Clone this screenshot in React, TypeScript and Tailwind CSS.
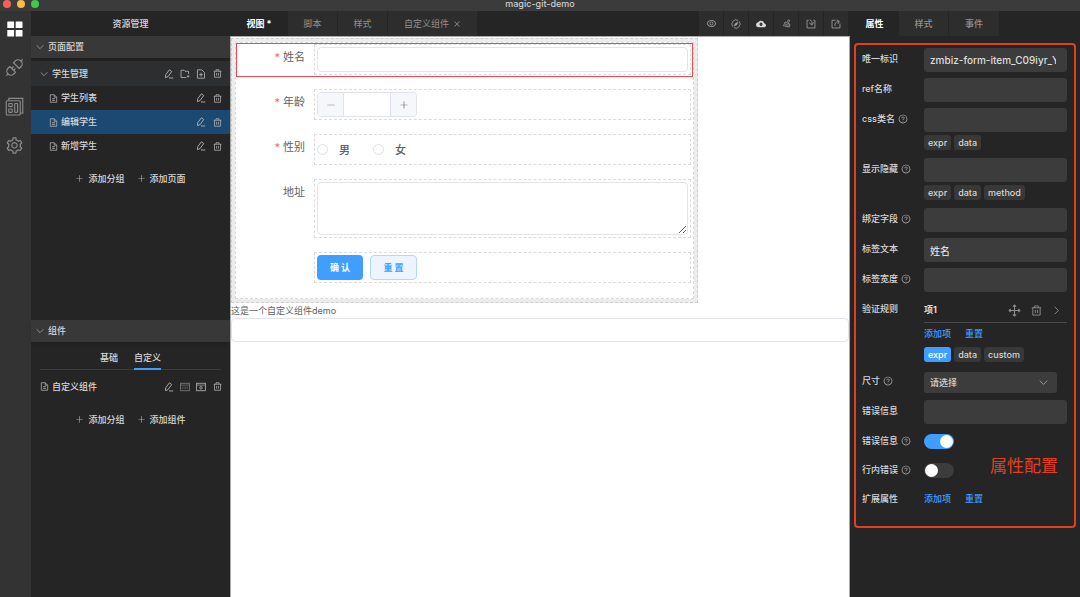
import React, { useState } from 'react';
import {
  AiOutlineSetting,
  AiOutlineEye,
  AiOutlinePlus,
  AiOutlineMinus,
  AiOutlineClose,
  AiOutlineQuestionCircle,
} from 'react-icons/ai';
import { MdCloudUpload } from 'react-icons/md';

type IconProps = { className?: string };

const Svg = ({ className, children }: IconProps & { children: React.ReactNode }) => (
  <svg
    viewBox="0 0 24 24"
    className={className}
    fill="none"
    stroke="currentColor"
    strokeWidth="2"
    aria-hidden="true"
  >
    {children}
  </svg>
);

const GridIcon = ({ className }: IconProps) => (
  <svg viewBox="0 0 16 16" className={className} fill="currentColor" aria-hidden="true">
    <rect x="0.3" y="0.5" width="6.8" height="6.6" rx="0.6" />
    <rect x="8.7" y="0.5" width="6.8" height="6.6" rx="0.6" />
    <rect x="0.3" y="9" width="6.8" height="6.6" rx="0.6" />
    <rect x="8.7" y="9" width="6.8" height="6.6" rx="0.6" />
  </svg>
);

const ApiIcon = ({ className }: IconProps) => (
  <svg
    viewBox="0 0 20 20"
    className={className}
    fill="none"
    stroke="currentColor"
    strokeWidth="1.3"
    strokeLinejoin="round"
    aria-hidden="true"
  >
    <path d="M9 5l6 6 1.800-1.800a4.200 4.200 0 0 0-6-6z" />
    <path d="M5 9l6 6-1.800 1.800a4.200 4.200 0 0 1-6-6z" />
    <path d="M16.600 3.400l2-2M3.400 16.600l-2 2M7 11l2-2M9 13l2-2" />
  </svg>
);

const LayoutIcon = ({ className }: IconProps) => (
  <svg
    viewBox="0 0 20 20"
    className={className}
    fill="none"
    stroke="currentColor"
    strokeWidth="1.2"
    aria-hidden="true"
  >
    <rect x="1.3" y="4" width="14.7" height="15" rx="1" />
    <path d="M4 4V1.4h14.7V17H16" />
    <rect x="4" y="6.8" width="3.6" height="3.4" rx="0.6" />
    <rect x="4" y="12.6" width="3.6" height="3.6" rx="0.6" />
    <rect x="10.2" y="6.8" width="3" height="9.4" rx="0.6" />
  </svg>
);

const ChevronDown = ({ className }: IconProps) => (
  <Svg className={className}>
    <path d="M2 7l10 10L22 7" strokeWidth="2.5" />
  </Svg>
);

const ChevronRight = ({ className }: IconProps) => (
  <Svg className={className}>
    <path d="M7 2l10 10L7 22" strokeWidth="2.5" />
  </Svg>
);

const EditIcon = ({ className }: IconProps) => (
  <Svg className={className}>
    <path d="M3.500 20.500l.5-6.500L13 2l5.500 4-9 12.500z" strokeWidth="2.2" />
    <path d="M12 21.500h10" strokeWidth="2.2" />
  </Svg>
);

const FileIcon = ({ className }: IconProps) => (
  <Svg className={className}>
    <path d="M3.500 2H14l6.500 6.500V22h-17z" />
    <path d="M14 2v6.500h6.500M8 12.500h8M8 17h8" />
  </Svg>
);

const FileAddIcon = ({ className }: IconProps) => (
  <Svg className={className}>
    <path d="M3.500 2H14l6.500 6.500V22h-17z" />
    <path d="M12 9v9M7.500 13.500h9" />
  </Svg>
);

const FolderAddIcon = ({ className }: IconProps) => (
  <Svg className={className}>
    <path d="M15 20.500H2.500V3H10l2 2.500h8.500V12" />
    <path d="M19.500 14.500v6M16.500 17.500h6" />
  </Svg>
);

const TrashIcon = ({ className }: IconProps) => (
  <Svg className={className}>
    <path d="M1.500 6h21M8 6V2h8v4M4 6v16h16V6" />
    <path d="M9.500 10.500v7M14.500 10.500v7" />
  </Svg>
);

const CodeBoxIcon = ({ className }: IconProps) => (
  <Svg className={className}>
    <rect x="1.5" y="3" width="21" height="18" />
    <path d="M1.5 7.500h21M8.500 11l-3 3 3 3M15.500 11l3 3-3 3M12 11v6" strokeWidth="1.6" />
  </Svg>
);

const PreviewBoxIcon = ({ className }: IconProps) => (
  <Svg className={className}>
    <rect x="1.5" y="3" width="21" height="18" />
    <path d="M1.5 7.500h21" strokeWidth="1.600" />
    <circle cx="12" cy="14" r="3" />
  </Svg>
);

const RefreshIcon = ({ className }: IconProps) => (
  <Svg className={className}>
    <path d="M4.500 18.500A10 10 0 0 1 17 3.300M19.500 5.500A10 10 0 0 1 7 20.700" />
    <path d="M17 7l-3.200 7.500L7 17l3.200-6.500z" fill="currentColor" strokeWidth="1" />
  </Svg>
);

const BroomIcon = ({ className }: IconProps) => (
  <Svg className={className}>
    <path d="M14 8.500l3-6.500 3.500 1.500-3 6.500" />
    <path d="M8 8l13 5.500-1.500 8L3 17.500c2.500-2 4-5 5-9.500z" />
    <path d="M7 13l13 4M10 19l1.500-3.500M15 20.500l1-3.500" strokeWidth="1.6" />
  </Svg>
);

const ImportIcon = ({ className }: IconProps) => (
  <Svg className={className}>
    <path d="M6.500 3H2.500v18.500h19V3h-4" />
    <path d="M9 2c5 1.500 6 5 5 11.500M7.500 9l6.500 5.500L18.500 8" />
  </Svg>
);

const ExportIcon = ({ className }: IconProps) => (
  <Svg className={className}>
    <path d="M11 3H2.500v18.500h19V11" />
    <path d="M9.500 17c-1-6.500 2-11 9-11M14 2l6 4-3.500 6" />
  </Svg>
);

const MoveIcon = ({ className }: IconProps) => (
  <Svg className={className}>
    <path d="M12 2v20M2 12h20M9 5l3-3 3 3M9 19l3 3 3-3M5 9l-3 3 3 3M19 9l3 3-3 3" />
  </Svg>
);

const iconButton = 'flex size-4 items-center justify-center';

interface TreeRowProps {
  title: string;
  kind: 'group' | 'page' | 'component';
  active?: boolean;
}

const TreeRow = ({ title, kind, active }: TreeRowProps) => (
  <li
    className={`flex items-center pr-[5px] ${kind === 'page' ? 'h-6 pl-[18px]' : 'h-[25px] pl-[9px]'} ${
      active ? 'bg-[#1b4971]' : kind === 'group' ? 'bg-[#2d2e30]' : ''
    }`}
  >
    {kind === 'group' ? (
      <ChevronDown className="mr-1 size-2 text-[#a0a0a0]" />
    ) : (
      <FileIcon className="mr-[3px] size-[9px] text-[#b4b4b4]" />
    )}
    <span className="flex-1">{title}</span>
    <span className="flex text-[#b4b4b4]">
      <button aria-label="编辑" className={iconButton}>
        <EditIcon className="size-[10px]" />
      </button>
      {kind === 'group' && (
        <>
          <button aria-label="添加分组" className={iconButton}>
            <FolderAddIcon className="size-[10px]" />
          </button>
          <button aria-label="添加页面" className={iconButton}>
            <FileAddIcon className="size-[10px]" />
          </button>
        </>
      )}
      {kind === 'component' && (
        <>
          <button aria-label="代码" className={`${iconButton} text-[#808080]`}>
            <CodeBoxIcon className="size-[10px]" />
          </button>
          <button aria-label="预览" className={iconButton}>
            <PreviewBoxIcon className="size-[10px]" />
          </button>
        </>
      )}
      <button aria-label="删除" className={iconButton}>
        <TrashIcon className="size-[9px]" />
      </button>
    </span>
  </li>
);

const AddButtons = ({ labels }: { labels: string[] }) => (
  <div className="flex h-[41px] items-center justify-center gap-3">
    {labels.map((label) => (
      <button key={label} className="flex items-center gap-1">
        <AiOutlinePlus className="size-[9px] text-[#a8a8a8]" />
        {label}
      </button>
    ))}
  </div>
);

const SectionTitle = ({ children }: { children: React.ReactNode }) => (
  <h2 className="flex h-[22px] items-center gap-1 bg-[#383838] pl-[5px] shadow-md">
    <ChevronDown className="size-2 text-[#a0a0a0]" />
    {children}
  </h2>
);

const Explorer = () => {
  const [tab, setTab] = useState('自定义');

  return (
    <aside className="w-[199px] shrink-0 bg-[#252526] font-medium text-[#d6d6d6]">
      <h1 className="flex h-[25px] items-center justify-center">资源管理</h1>
      <section className="min-h-[284px]">
        <SectionTitle>页面配置</SectionTitle>
        <ul className="pt-[3px]">
          <TreeRow title="学生管理" kind="group" />
          <TreeRow title="学生列表" kind="page" />
          <TreeRow title="编辑学生" kind="page" active />
          <TreeRow title="新增学生" kind="page" />
        </ul>
        <AddButtons labels={['添加分组', '添加页面']} />
      </section>
      <section>
        <SectionTitle>组件</SectionTitle>
        <div className="mx-[9px] mt-1 flex h-6 justify-center gap-4 border-b border-[#3c3c3c]">
          {['基础', '自定义'].map((name) => (
            <button
              key={name}
              onClick={() => setTab(name)}
              className={`-mb-px border-b-2 pt-[2px] ${
                name === tab ? 'border-[#409eff]' : 'border-transparent'
              }`}
            >
              {name}
            </button>
          ))}
        </div>
        <ul className="pt-1">
          <TreeRow title="自定义组件" kind="component" />
        </ul>
        <AddButtons labels={['添加分组', '添加组件']} />
      </section>
    </aside>
  );
};

interface FormItemProps {
  label?: string;
  required?: boolean;
  selected?: boolean;
  htmlFor?: string;
  children: React.ReactNode;
}

const FormItem = ({ label, required, selected, htmlFor, children }: FormItemProps) => (
  <div
    className={`mb-[11px] flex border ${selected ? 'border-[#f04a50]' : 'border-transparent'}`}
  >
    <label
      htmlFor={htmlFor}
      className="w-[77px] shrink-0 pr-[9px] pt-1 text-right text-[11px] leading-[18px] text-[#606266]"
    >
      {required && <span className="mr-[3px] text-[#f56c6c]">*</span>}
      {label}
    </label>
    <div className="mb-px mr-px flex min-h-[31px] min-w-0 flex-1 items-center border border-dashed border-[#dcdcdc] p-[2px]">
      {children}
    </div>
  </div>
);

const Canvas = () => (
  <div className="flex-1 border-x border-t border-[#a9a9a9] bg-white text-[#606266]">
    {/* form container, the striped band marks its drop area */}
    <div className="mt-px w-[467px] max-w-full border border-dashed border-[#cfcfcf] bg-[#ececec] p-[3px]">
      <form className="border border-dashed border-[#dadada] bg-white pb-[2px]">
        <FormItem label="姓名" required selected htmlFor="name">
          <input id="name" className="h-[25px] w-full rounded-sm border border-[#e2e4e9] px-2" />
        </FormItem>
        <FormItem label="年龄" required htmlFor="age">
          <div className="flex h-[25px] w-[100px] overflow-hidden rounded-sm border border-[#dfe2e8]">
            <button
              type="button"
              aria-label="减少"
              className="flex w-[26px] shrink-0 items-center justify-center border-r border-[#dfe2e8] bg-[#f5f7fa] text-[#808389]"
            >
              <AiOutlineMinus className="size-[10px]" />
            </button>
            <input id="age" className="w-full min-w-0 text-center" />
            <button
              type="button"
              aria-label="增加"
              className="flex w-[26px] shrink-0 items-center justify-center border-l border-[#dfe2e8] bg-[#f5f7fa] text-[#707379]"
            >
              <AiOutlinePlus className="size-[10px]" />
            </button>
          </div>
        </FormItem>
        <FormItem label="性别" required>
          {['男', '女'].map((name) => (
            <label
              key={name}
              className="mr-[23px] flex items-center gap-[11px] text-[11px] font-medium leading-4"
            >
              <input
                type="radio"
                name="gender"
                className="size-[11px] appearance-none rounded-full border border-[#dcdfe6] checked:border-4 checked:border-[#409eff]"
              />
              {name}
            </label>
          ))}
        </FormItem>
        <FormItem label="地址" htmlFor="address">
          <textarea
            id="address"
            className="block h-[53px] w-full resize rounded-sm border border-[#e2e4e9] px-2"
          />
        </FormItem>
        <FormItem>
          <button
            type="button"
            className="h-[25px] w-[46px] rounded-sm bg-[#409eff] font-bold text-white"
          >
            确 认
          </button>
          <button
            type="button"
            className="ml-[7px] h-[25px] w-[47px] rounded-sm border border-[#b3d8ff] bg-[#ecf5ff] font-bold text-[#409eff]"
          >
            重 置
          </button>
        </FormItem>
      </form>
    </div>
    <label htmlFor="custom" className="block leading-[15px]">
      这是一个自定义组件demo
    </label>
    <input id="custom" className="block h-6 w-full rounded-sm border border-[#e2e4e9] px-2" />
  </div>
);

const tools = [
  { name: '预览', icon: <AiOutlineEye className="size-[11px]" /> },
  { name: '刷新', icon: <RefreshIcon className="size-[10px]" /> },
  { name: '发布', icon: <MdCloudUpload className="size-[10px] text-[#d8d8d8]" /> },
  { name: '清空', icon: <BroomIcon className="size-[9px]" /> },
  { name: '导入', icon: <ImportIcon className="size-[10px]" /> },
  { name: '导出', icon: <ExportIcon className="size-[10px]" /> },
];

const Editor = () => (
  <main className="flex min-w-0 flex-1 flex-col">
    <div className="flex h-[25px] bg-[#252526] text-[#909090]">
      <button className="w-[58px] font-bold text-white">视图 *</button>
      <button className="w-[50px] border-r border-[#252526] bg-[#2d2d2d]">脚本</button>
      <button className="w-[50px] border-r border-[#252526] bg-[#2d2d2d]">样式</button>
      <button className="flex w-[89px] items-center justify-center gap-1 bg-[#2d2d2d]">
        自定义组件
        <AiOutlineClose className="size-[8px]" />
      </button>
      <div className="ml-auto flex pr-px">
        {tools.map((tool) => (
          <button
            key={tool.name}
            aria-label={tool.name}
            className="flex w-[25px] items-center justify-center border-r border-[#252526] bg-[#2d2d2d] text-[#a0a0a0]"
          >
            {tool.icon}
          </button>
        ))}
      </div>
    </div>
    <Canvas />
  </main>
);

interface PropRowProps {
  id?: string;
  label: string;
  help?: boolean;
  compact?: boolean;
  children: React.ReactNode;
}

const PropRow = ({ id, label, help, compact, children }: PropRowProps) => (
  <div className={`mb-[6px] flex ${compact ? 'min-h-[23px]' : 'min-h-6'}`}>
    <label htmlFor={id} className="flex h-[21px] w-[62px] shrink-0 items-center gap-[3px]">
      {label}
      {help && <AiOutlineQuestionCircle className="size-[10px] text-[#b0b0b0]" />}
    </label>
    <div className="min-w-0 flex-1">{children}</div>
  </div>
);

const TextField = ({ id, value }: { id: string; value?: string }) => (
  <input
    id={id}
    defaultValue={value}
    className="block h-6 w-full rounded-[3px] bg-[#3c3c3c] pl-[6px] pr-[11px] text-[10px] text-[#dcdcdc] outline-none"
  />
);

const Tags = ({ items, active }: { items: string[]; active?: string }) => (
  <div className="flex gap-[3px] pb-[2px] pt-[3px]">
    {items.map((item) => (
      <button
        key={item}
        className={`h-[15px] rounded-[3px] px-1 text-[9px] leading-[15px] ${
          item === active ? 'bg-[#409eff] text-white' : 'bg-[#383838]'
        }`}
      >
        {item}
      </button>
    ))}
  </div>
);

const Links = () => (
  <div className="flex h-[21px] items-center gap-[14px] text-[#409eff]">
    <button>添加项</button>
    <button>重置</button>
  </div>
);

const Toggle = ({ id, on }: { id: string; on?: boolean }) => (
  <input
    id={id}
    type="checkbox"
    role="switch"
    defaultChecked={on}
    className="mt-1 block h-[15px] w-[30px] appearance-none rounded-full bg-[#3c3c3c] p-[1px] before:block before:size-[13px] before:rounded-full before:bg-white checked:bg-[#409eff] checked:before:ml-[15px]"
  />
);

const Properties = () => (
  <aside className="w-[230px] shrink-0 bg-[#252526] font-medium text-[#d6d6d6]">
    <div className="flex h-[25px] text-[#909090]">
      <button className="w-[49px] font-bold text-white">属性</button>
      <button className="w-[50px] border-r border-[#252526] bg-[#2d2d2d]">样式</button>
      <button className="w-[50px] bg-[#2d2d2d]">事件</button>
    </div>
    <div className="relative ml-1 mr-1 mt-[7px] rounded-[4px] border-2 border-[#e2401c] pb-[9px] pl-[6px] pr-[7px] pt-[3px]">
      <PropRow id="uid" label="唯一标识">
        <TextField id="uid" value="zmbiz-form-item_C09iyr_Y" />
      </PropRow>
      <PropRow id="ref" label="ref名称">
        <TextField id="ref" />
      </PropRow>
      <PropRow id="css" label="css类名" help>
        <TextField id="css" />
        <Tags items={['expr', 'data']} />
      </PropRow>
      <PropRow id="visible" label="显示隐藏" help>
        <TextField id="visible" />
        <Tags items={['expr', 'data', 'method']} />
      </PropRow>
      <PropRow id="field" label="绑定字段" help>
        <TextField id="field" />
      </PropRow>
      <PropRow id="label" label="标签文本">
        <TextField id="label" value="姓名" />
      </PropRow>
      <PropRow id="label-width" label="标签宽度" help>
        <TextField id="label-width" />
      </PropRow>
      <PropRow label="验证规则">
        <div className="flex h-[25px] items-center border-b border-[#4a4a4a] pr-[6px] text-[#8c8c8c]">
          <span className="flex-1 font-bold text-[#dcdcdc]">项1</span>
          <button aria-label="移动">
            <MoveIcon className="size-[13px]" />
          </button>
          <button aria-label="删除" className="ml-[10px]">
            <TrashIcon className="size-[11px]" />
          </button>
          <button aria-label="展开" className="ml-[10px]">
            <ChevronRight className="size-[9px]" />
          </button>
        </div>
        <Links />
        <Tags items={['expr', 'data', 'custom']} active="expr" />
      </PropRow>
      <PropRow id="size" label="尺寸" help>
        <div className="relative mr-[10px] pt-[2px]">
          <select
            id="size"
            className="block h-[21px] w-full appearance-none rounded-[3px] bg-[#3c3c3c] px-[6px] outline-none"
          >
            <option>请选择</option>
          </select>
          <ChevronDown className="pointer-events-none absolute right-[9px] top-2 size-[9px] text-[#a0a0a0]" />
        </div>
      </PropRow>
      <PropRow id="error" label="错误信息">
        <TextField id="error" />
      </PropRow>
      <PropRow id="show-error" label="错误信息" help compact>
        <Toggle id="show-error" on />
      </PropRow>
      <PropRow id="inline-error" label="行内错误" help compact>
        <Toggle id="inline-error" />
      </PropRow>
      <PropRow label="扩展属性" compact>
        <Links />
      </PropRow>
      <span className="absolute bottom-12 right-4 text-[17px] font-normal leading-6 text-[#e2401c]">
        属性配置
      </span>
    </div>
  </aside>
);

const App = () => (
  <div className="flex min-h-screen flex-col bg-[#252526] font-['Inter','Noto_Sans_CJK_SC',sans-serif] text-[9px]">
    <header className="relative flex h-[11px] justify-center bg-[#3b3b3b]">
      <div className="absolute left-[3px] top-0 flex gap-[6px]">
        <span className="size-2 rounded-full bg-[#f5605a]" />
        <span className="size-2 rounded-full bg-[#f7bd44]" />
        <span className="size-2 rounded-full bg-[#3fc84a]" />
      </div>
      <span className="text-[9px] font-medium leading-[7px] text-[#cfcfcf]">magic-git-demo</span>
    </header>
    <div className="flex flex-1">
      <nav className="flex w-[31px] shrink-0 flex-col items-center gap-5 bg-[#333333] pr-[2px] pt-2 text-[#8a8a8a]">
        <a
          href="#pages"
          aria-label="资源管理"
          className="flex size-[19px] items-center justify-center text-white"
        >
          <GridIcon className="size-4" />
        </a>
        <a href="#api" aria-label="接口">
          <ApiIcon className="size-[19px]" />
        </a>
        <a href="#layout" aria-label="布局">
          <LayoutIcon className="size-[19px]" />
        </a>
        <a href="#setting" aria-label="设置">
          <AiOutlineSetting className="size-[19px]" />
        </a>
      </nav>
      <Explorer />
      <Editor />
      <Properties />
    </div>
  </div>
);

export default App;
